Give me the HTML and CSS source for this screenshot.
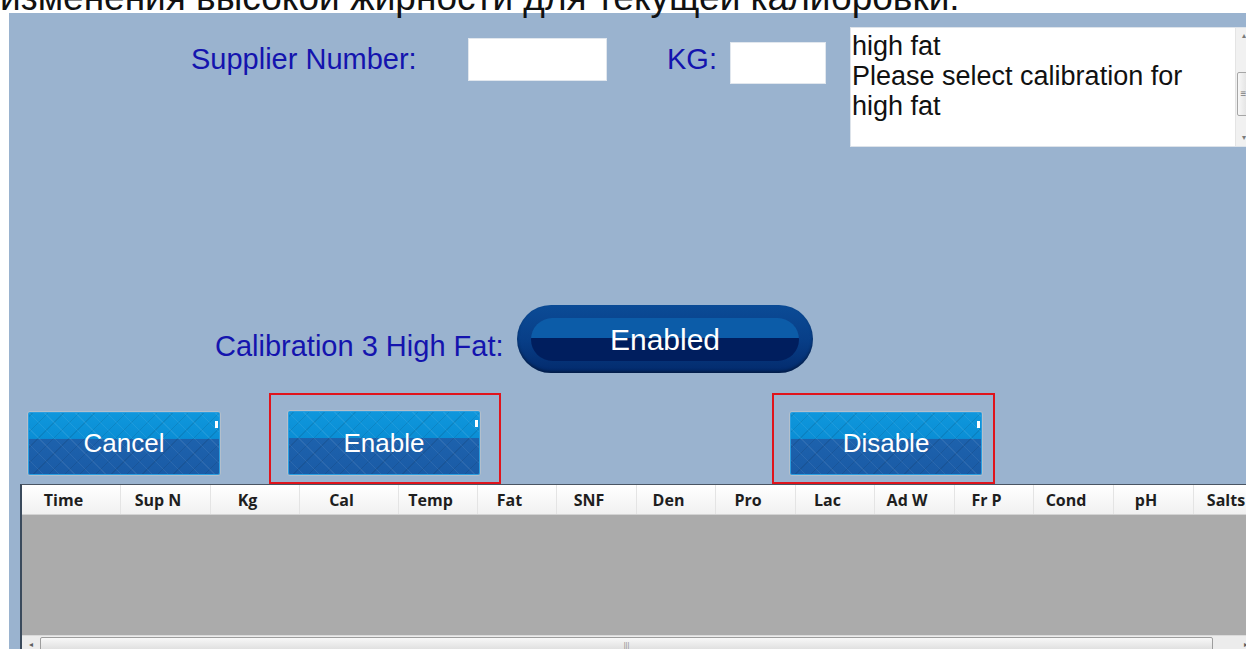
FILE: index.html
```html
<!DOCTYPE html>
<html lang="ru">
<head>
<meta charset="UTF-8">
<meta name="viewport" content="width=device-width, initial-scale=1.0">
<link rel="stylesheet" href="styles.css">
<title>Calibration</title>
</head>
<body>
<div id="caption">изменения высокой жирности для текущей калибровки.</div>

<div id="panel">
  <div class="row top-row">
    <div class="label supplier-label">Supplier Number:</div>
    <input class="field supplier-field" type="text">
    <div class="label kg-label">KG:</div>
    <input class="field kg-field" type="text">
    <div class="messages">
      <div class="messages-text">high fat<br>Please select calibration for<br>high fat</div>
      <div class="vscroll">
        <span class="varrow">&#9652;</span>
        <span class="vthumb">&#8801;</span>
        <span class="varrow">&#9662;</span>
      </div>
    </div>
  </div>

  <div class="row cal-row">
    <div class="label cal-label">Calibration 3 High Fat:</div>
    <div class="pill"><span>Enabled</span></div>
  </div>

  <div class="row button-row">
    <button class="btn cancel">Cancel</button>
    <div class="highlight enable-box"><button class="btn">Enable</button></div>
    <div class="highlight disable-box"><button class="btn">Disable</button></div>
  </div>

  <div class="grid">
    <div class="grid-head">
      <div>Time</div>
      <div>Sup N</div>
      <div>Kg</div>
      <div>Cal</div>
      <div>Temp</div>
      <div>Fat</div>
      <div>SNF</div>
      <div>Den</div>
      <div>Pro</div>
      <div>Lac</div>
      <div>Ad W</div>
      <div>Fr P</div>
      <div>Cond</div>
      <div>pH</div>
      <div>Salts</div>
    </div>
    <div class="grid-body"></div>
    <div class="hscroll">
      <span class="harrow">&#9666;</span>
      <span class="hthumb">|||</span>
      <span class="harrow right">&#9656;</span>
    </div>
  </div>
</div>
</body>
</html>
```

FILE: styles.css
```css
body {
  margin: 0;
  background: #fff;
  font-family: "Liberation Sans", Arial, sans-serif;
  height: 649px;
  overflow: hidden;
}
#caption {
  height: 15px;
  margin-top: -2px;
  font-size: 37px;
  line-height: 0;
  white-space: nowrap;
  color: #111;
}
#panel {
  margin-left: 9px;
  height: 640px;
  background-color: #9ab3cf;
  display: flex;
  flex-direction: column;
  overflow: hidden;
}
.row {
  display: flex;
  align-items: flex-start;
  flex-shrink: 0;
}
.row > * {
  flex-shrink: 0;
}
.label {
  color: #1414ae;
  font-size: 29px;
  line-height: 30px;
  white-space: nowrap;
}

/* top row */
.top-row {
  height: 134px;
}
.supplier-label {
  width: 277px;
  margin: 31px 0 0 182px;
}
.field {
  box-sizing: border-box;
  border: 1px solid #e1e7ee;
  background: #fff;
  padding: 0;
  margin: 0;
}
.supplier-field {
  width: 139px;
  height: 43px;
  margin-top: 25px;
}
.kg-label {
  width: 63px;
  margin: 31px 0 0 60px;
}
.kg-field {
  width: 96px;
  height: 42px;
  margin-top: 29px;
}
.messages {
  box-sizing: border-box;
  width: 402px;
  height: 120px;
  margin: 14px 0 0 24px;
  background: #fff;
  border: 1px solid #dde3ea;
  display: flex;
}
.messages-text {
  flex: 1;
  padding: 3px 1px;
  font-size: 27px;
  line-height: 30px;
  color: #111;
}
.vscroll {
  width: 15px;
  background: #f1f1f1;
  border-left: 1px solid #e4e4e4;
  display: flex;
  flex-direction: column;
  align-items: center;
  font-size: 8px;
  color: #7a7a7a;
}
.varrow {
  height: 16px;
  line-height: 16px;
}
.vthumb {
  box-sizing: border-box;
  width: 13px;
  height: 44px;
  margin-top: 28px;
  margin-bottom: auto;
  border: 1px solid #a6a6a6;
  border-radius: 2px;
  background: linear-gradient(to right, #f8f8f8, #dedede);
  font-size: 10px;
  line-height: 42px;
  text-align: center;
}

/* calibration row */
.cal-row {
  height: 68px;
  margin-top: 158px;
}
.cal-label {
  width: 302px;
  margin: 26px 0 0 206px;
}
.pill {
  box-sizing: border-box;
  width: 296px;
  height: 68px;
  padding: 13px 14px 12px;
  border-radius: 34px;
  background: linear-gradient(to bottom, #0b4b96 0%, #083f88 50%, #032a6c 100%);
  box-shadow: inset 0 -2px 3px rgba(0, 0, 0, 0.35);
}
.pill span {
  display: block;
  height: 43px;
  border-radius: 22px;
  background: linear-gradient(to bottom, #0c5ca8 0%, #0c5ca8 46%, #001e5e 47%, #001e5e 100%);
  color: #fff;
  font-size: 30px;
  line-height: 43px;
  text-align: center;
}

/* button row */
.button-row {
  height: 91px;
  margin-top: 20px;
}
.btn {
  position: relative;
  box-sizing: border-box;
  width: 194px;
  height: 65px;
  padding: 0;
  border: 1px solid #b3bfcc;
  border-radius: 3px;
  color: #fff;
  font-family: "Liberation Sans", Arial, sans-serif;
  font-size: 26px;
  background:
    repeating-linear-gradient(45deg, rgba(255, 255, 255, 0.07) 0 1px, transparent 1px 11px),
    repeating-linear-gradient(-45deg, rgba(0, 0, 0, 0.09) 0 1px, transparent 1px 11px),
    linear-gradient(to bottom, #0f97dc 0%, #0a8ed5 42%, #1d62ad 43%, #1a5ba6 100%);
  box-shadow: inset 0 0 0 1px #2a9ee0;
}
.btn::after {
  content: "";
  position: absolute;
  right: 2px;
  top: 9px;
  width: 3px;
  height: 7px;
  background: #fff;
}
.cancel {
  margin: 18px 0 0 18px;
}
.highlight {
  box-sizing: border-box;
  height: 91px;
  border: 2px solid #e0141c;
}
.enable-box {
  width: 232px;
  margin-left: 48px;
  padding: 15px 0 0 16px;
}
.enable-box .btn {
  height: 66px;
}
.disable-box {
  width: 223px;
  margin-left: 271px;
  padding: 16px 0 0 15px;
}

/* data grid */
.grid {
  flex: 1;
  margin-left: 11px;
  border-top: 1px solid #4a5563;
  border-left: 2px solid #3a4a5c;
  background: #ababab;
  display: flex;
  flex-direction: column;
  overflow: hidden;
}
.grid-head {
  box-sizing: border-box;
  height: 30px;
  flex-shrink: 0;
  display: grid;
  grid-template-columns: 99px 90px 89px 99px 79px 79px 80px 79px 80px 79px 80px 79px 80px 80px 80px;
  background: linear-gradient(to bottom, #ffffff, #f1f1f1);
  border-bottom: 1px solid #d3d3d3;
}
.grid-head div {
  padding: 2px 15px 0 0;
  border-right: 1px solid #e4e4e4;
  font-family: "Open Sans", sans-serif;
  font-weight: 700;
  font-size: 16px;
  line-height: 27px;
  text-align: center;
  white-space: nowrap;
  color: #1e1e1e;
}
.grid-body {
  flex: 1;
}
.hscroll {
  height: 17px;
  flex-shrink: 0;
  display: flex;
  align-items: center;
  background: #ececec;
  border-top: 1px solid #dadada;
  font-size: 8px;
  color: #606060;
}
.harrow {
  width: 17px;
  text-align: center;
}
.harrow.right {
  margin-left: auto;
  margin-right: -8px;
}
.hthumb {
  box-sizing: border-box;
  width: 1173px;
  height: 15px;
  margin-left: 1px;
  border: 1px solid #9d9d9d;
  border-radius: 2px;
  background: linear-gradient(to bottom, #f8f8f8, #dcdcdc);
  font-size: 7px;
  line-height: 13px;
  text-align: center;
  color: #8a8a8a;
}
```
